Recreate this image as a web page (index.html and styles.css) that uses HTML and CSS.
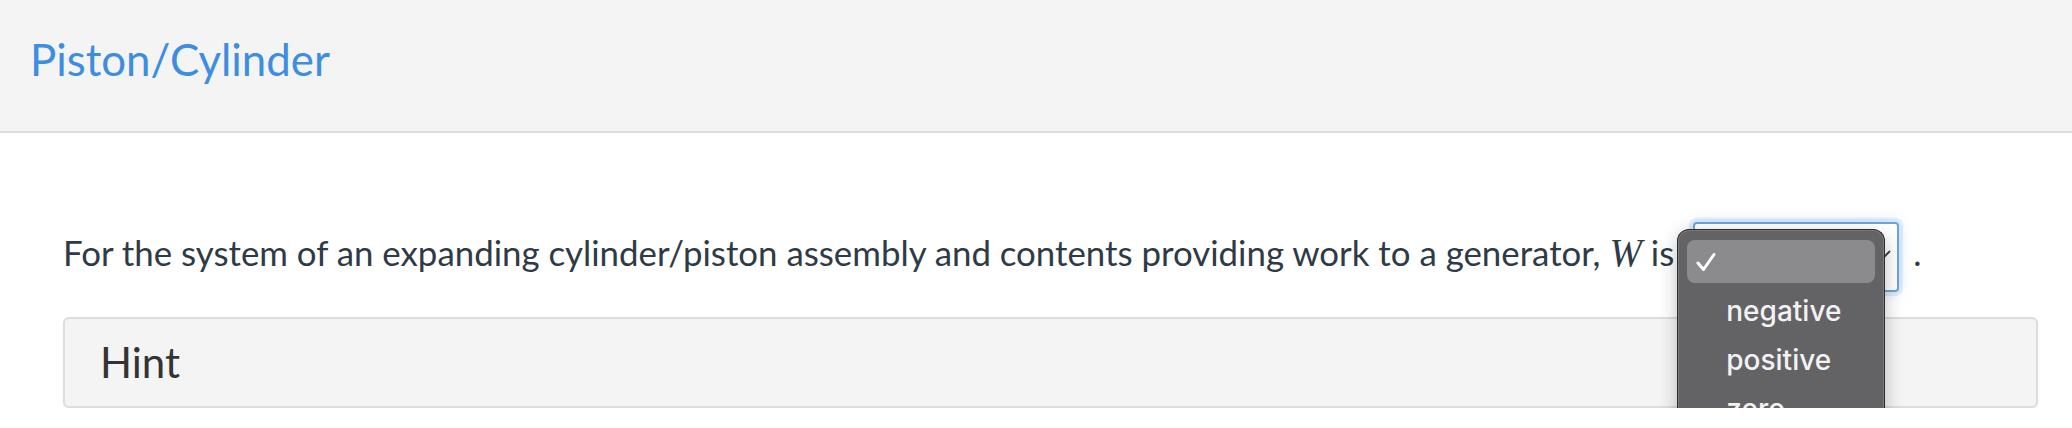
FILE: index.html
```html
<!DOCTYPE html>
<html lang="en">
<head>
<meta charset="utf-8">
<title>Piston/Cylinder</title>
<link rel="stylesheet" href="styles.css">
</head>
<body>
<header class="header">
  <h1 class="title">Piston/Cylinder</h1>
</header>
<main class="content">
  <p class="question">For the system of an expanding cylinder/piston assembly and contents providing work to a generator, <span class="math">W</span> is<span class="select-wrap"><span class="select"><svg class="chevron" width="12" height="10" viewBox="0 0 12 10"><path d="M1 2 L6 7 L11 2" fill="none" stroke="#444" stroke-width="2"/></svg></span><span class="menu"><span class="item item-selected"><svg class="check" width="20" height="20" viewBox="0 0 20 20"><path d="M2 11 L7.5 17.5 L18 2.5" fill="none" stroke="#ffffff" stroke-width="3" stroke-linecap="round" stroke-linejoin="round"/></svg></span><span class="item">negative</span><span class="item">positive</span><span class="item">zero</span></span></span>.</p>
  <div class="hint">Hint</div>
</main>
</body>
</html>
```
FILE: styles.css
```css
html, body {
  margin: 0;
  padding: 0;
  overflow: hidden;
  background: #ffffff;
}

body {
  font-family: Lato, "Open Sans", sans-serif;
}

.header {
  box-sizing: border-box;
  height: 133px;
  background: #f4f4f4;
  border-bottom: 2px solid #dcdcdc;
  padding: 33px 0 0 30px;
}

.title {
  margin: 0;
  font-weight: 400;
  font-size: 43.8px;
  line-height: 1.2;
  color: #3d8ee0;
}

.content {
  padding: 0 34px 0 63px;
}

.question {
  margin: 89px 0 0 0;
  font-size: 34.85px;
  color: #2e3b47;
  white-space: nowrap;
}

.math {
  font-family: "Liberation Serif", "DejaVu Serif", serif;
  font-style: italic;
  font-size: 39px;
}

.select-wrap {
  position: relative;
  display: inline-block;
  vertical-align: middle;
  margin: 0 14px 0 19px;
}

.select {
  box-sizing: border-box;
  display: flex;
  align-items: center;
  justify-content: flex-end;
  width: 206px;
  height: 70px;
  padding-right: 6px;
  background: #ffffff;
  border: 2px solid #6ba4e2;
  border-radius: 4px;
  box-shadow: 0 0 0 4px rgba(120, 170, 230, 0.18), 0 0 14px rgba(120, 170, 230, 0.35);
}

.chevron {
  margin-top: -6px;
}

.menu {
  position: absolute;
  left: -16px;
  top: 7px;
  box-sizing: border-box;
  width: 208px;
  height: 199px;
  overflow: hidden;
  display: flex;
  flex-direction: column;
  gap: 6px;
  padding: 10px 9px;
  background: #636366;
  border: 1px solid #2c2c2e;
  border-bottom: 0;
  border-radius: 12px 12px 0 0;
  box-shadow: inset 0 0 0 1px #7a7a7d, 0 6px 18px rgba(0, 0, 0, 0.25);
  font-family: Inter, "Liberation Sans", Arial, sans-serif;
  font-weight: 500;
  font-size: 28px;
  color: #f2f2f2;
}

.item {
  display: flex;
  align-items: center;
  height: 43px;
  padding-left: 39px;
  border-radius: 8px;
  flex-shrink: 0;
}

.item-selected {
  padding-left: 9px;
  background: #8b8b8e;
}

.hint {
  box-sizing: border-box;
  margin-top: 25px;
  height: 91px;
  display: flex;
  align-items: center;
  padding: 0 0 2px 35px;
  background: #f4f4f4;
  border: 2px solid #dddddd;
  border-radius: 6px;
  box-shadow: 0 1px 3px rgba(0, 0, 0, 0.06);
  font-size: 42px;
  color: #333333;
}
```
